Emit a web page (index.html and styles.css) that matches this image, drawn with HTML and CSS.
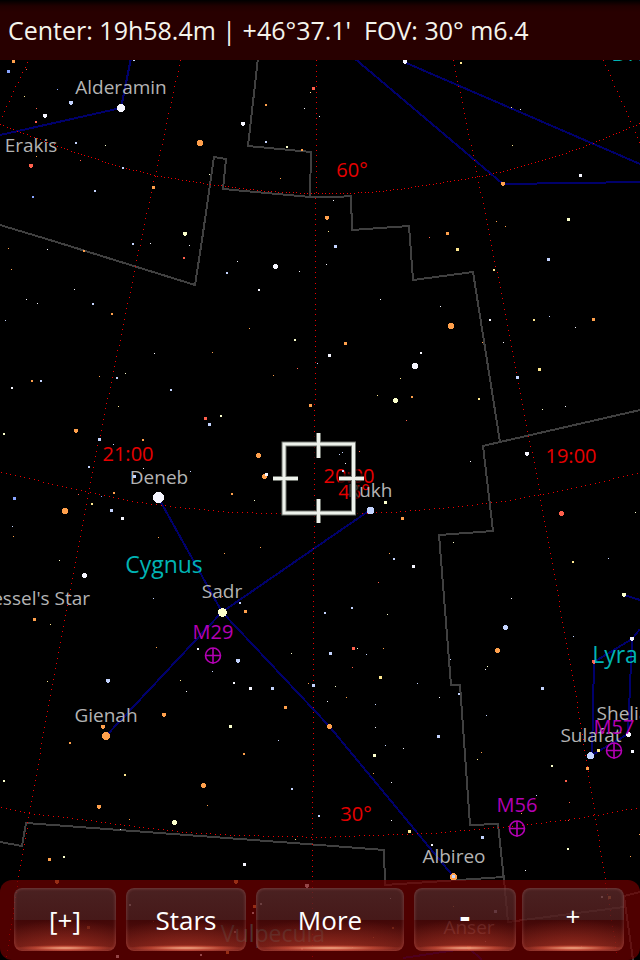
FILE: index.html
```
<!DOCTYPE html>
<html lang="en">
<head>
    <meta charset="UTF-8">
    <meta name="viewport" content="width=device-width, initial-scale=1.0">
    <title>Star Chart</title>
    <link rel="stylesheet" href="styles.css">
</head>
<body>

<svg class="sky" viewBox="0 0 640 960" preserveAspectRatio="xMidYMid slice" role="img" aria-label="Sky chart around Cygnus">
    <!-- Constellation boundaries -->
    <g class="boundaries">
        <polyline points="258,58 248,146 311,152 310,196"/>
        <polyline points="0,225 50,240 195,285 202,240 214,157 226,159 223,189 310,197 337,197 351,196 352,230 409,226 413,280 473,272 500,442"/>
        <polyline points="640,410 500,442 483,446 493,531 439,535 451,685 460,685 470,825 498,824 504,880 508,922 624,907 624,896 640,892"/>
        <polyline points="624,896 633,960"/>
        <polyline points="0,842 22,846 26,823 320,845 384,850 385,885 503,877"/>
    </g>

    <!-- Constellation figures -->
    <g class="figures">
        <polyline points="131,58 121,108 0,135"/>
        <polyline points="354,58 503,184 640,182"/>
        <polyline points="404,62 640,164"/>
        <polyline points="158,497 222,612 106,736"/>
        <polyline points="370,510 222,612 329,726 453,876"/>
        <polyline points="624,595 640,600"/>
        <polyline points="640,629 632,639 594,662 592,755 628,734 632,639"/>
        <polyline points="403,958 469,948 482,960"/>
    </g>

    <g id="grid" class="grid"></g>

    <g class="label grid-label">
        <text x="128" y="461">21:00</text>
        <text x="349" y="483">20:00</text>
        <text x="571" y="463">19:00</text>
        <text x="352" y="177">60°</text>
        <text x="354" y="499">45°</text>
        <text x="356" y="821">30°</text>
    </g>

    <g class="label star-label">
        <text x="121" y="94">Alderamin</text>
        <text x="31" y="152">Erakis</text>
        <text x="159" y="484">Deneb</text>
        <text x="370" y="497">Rukh</text>
        <text x="35" y="605">Bessel's Star</text>
        <text x="222" y="598">Sadr</text>
        <text x="106" y="722">Gienah</text>
        <text x="454" y="863">Albireo</text>
        <text x="591" y="742">Sulafat</text>
        <text x="628" y="720">Sheliak</text>
        <text x="469" y="934">Anser</text>
    </g>

    <g id="stars" class="stars"></g>

    <g class="label constellation-label">
        <text x="164" y="573">Cygnus</text>
        <text x="615" y="663">Lyra</text>
        <text x="643" y="61">Draco</text>
        <text x="273" y="942">Vulpecula</text>
    </g>

    <g class="label messier-label">
        <text x="213" y="639">M29</text>
        <text x="517" y="812">M56</text>
        <text x="614" y="734">M57</text>
    </g>
    <g class="messier">
        <path d="M205.5 655.5a7.5 7.5 0 1 0 15 0a7.5 7.5 0 1 0 -15 0M205 655.5h16M213 648v16"/>
        <path d="M509.5 828.5a7.5 7.5 0 1 0 15 0a7.5 7.5 0 1 0 -15 0M509 828.5h16M517 821v16"/>
        <path d="M606.5 750.5a7.5 7.5 0 1 0 15 0a7.5 7.5 0 1 0 -15 0M606 750.5h16M614 743v16"/>
    </g>

    <!-- Reticle -->
    <g class="reticle">
        <path class="reticle-shadow" d="M284 444H353.5V513H284ZM318.5 433V458M318.5 499V523M273 478.5H298M339 478.5H364"/>
        <path class="reticle-edge" d="M284 444H353.5V513H284ZM318.5 433V458M318.5 499V523M273 478.5H298M339 478.5H364"/>
        <path class="reticle-line" d="M284 444H353.5V513H284ZM318.5 433V458M318.5 499V523M273 478.5H298M339 478.5H364"/>
    </g>
</svg>

<div class="screen">
    <header class="status">Center: 19h58.4m | +46°37.1'&nbsp; FOV: 30° m6.4</header>

    <nav class="toolbar">
        <button class="key key-small" type="button">[+]</button>
        <button class="key key-stars" type="button">Stars</button>
        <button class="key key-more" type="button">More</button>
        <div class="zoom">
            <button class="key key-sign key-minus" type="button">-</button>
            <button class="key key-sign" type="button">+</button>
        </div>
    </nav>
</div>

<script src="script.js"></script>
</body>
</html>
```
FILE: styles.css
```
* {
    box-sizing: border-box;
}
body {
    margin: 0;
    background-color: #000;
    font-family: "Open Sans", "Noto Sans", sans-serif;
    overflow: hidden;
}
.sky {
    position: absolute;
    top: 0;
    left: 0;
    width: 100%;
    height: 100%;
}
.screen {
    position: relative;
    min-height: 100vh;
    display: flex;
    flex-direction: column;
    justify-content: space-between;
}

/* chart */
.boundaries {
    fill: none;
    stroke: #404040;
    stroke-width: 2;
}
.figures {
    fill: none;
    stroke: #00006c;
    stroke-width: 2;
}
.grid {
    fill: #f00000;
}
.boundaries, .figures, .grid, .stars {
    shape-rendering: crispEdges;
}
.label {
    font-size: 19px;
    text-anchor: middle;
}
.grid-label {
    fill: #e60000;
    font-size: 20px;
}
.star-label {
    fill: #b4b4b4;
}
.constellation-label {
    fill: #00b4b4;
    font-size: 23px;
}
.messier-label {
    fill: #b400b4;
    font-size: 20px;
}
.messier {
    fill: none;
    stroke: #b400b4;
    stroke-width: 1.6;
}
.reticle {
    fill: none;
}
.reticle-shadow {
    stroke: #000;
    stroke-width: 10;
    stroke-opacity: 0.7;
}
.reticle-edge {
    stroke: #70746e;
    stroke-width: 5;
}
.reticle-line {
    stroke: #eef2ec;
    stroke-width: 3;
}
.o { fill: #ffa04c; }
.r { fill: #ff604c; }
.Y { fill: #ffe890; }
.y { fill: #fbffcc; }
.w { fill: #f6f6ff; }
.b { fill: #c4d4ff; }
.B { fill: #88a4ff; }

/* top line */
.status {
    height: 60px;
    padding: 0 8px;
    line-height: 60px;
    font-size: 25px;
    white-space: pre;
    color: #f4f4ec;
    background: linear-gradient(#000, #200000 6px, #280000 12px);
}

/* bottom buttons */
.toolbar {
    display: flex;
    gap: 10px;
    height: 80px;
    padding: 8px 16px 9px 14px;
    border-radius: 12px;
    background-color: rgba(109, 0, 0, 0.72);
}
.key {
    flex: 102 1 0;
    min-width: 0;
    padding: 0;
    border: none;
    border-radius: 8px;
    font-family: inherit;
    font-size: 26px;
    color: #fff;
    background:
        radial-gradient(ellipse 50% 3px at 50% 60px, rgba(255, 190, 150, 0.9), rgba(255, 110, 80, 0.4) 60%, transparent),
        radial-gradient(ellipse 75% 32px at 50% 100%, rgba(190, 60, 40, 0.55), transparent),
        linear-gradient(rgba(70, 66, 66, 0.5), rgba(62, 50, 50, 0.5) 50%, rgba(52, 14, 14, 0.5) 51%, rgba(130, 50, 40, 0.5));
    box-shadow: inset 0 0 3px 1px rgba(255, 150, 150, 0.22);
    cursor: pointer;
}
.key-stars {
    flex-grow: 120;
}
.key-more {
    flex-grow: 148;
}
.zoom {
    flex: 210 1 0;
    display: flex;
    gap: 6px;
}
.key-sign {
    padding-bottom: 8px;
}
.key-minus {
    font-size: 32px;
    font-weight: bold;
}
```
FILE: script.js
```
const svgNS = "http://www.w3.org/2000/svg";
const starLayer = document.getElementById("stars");
const gridLayer = document.getElementById("grid");

// x y size colour
const stars = `
13 61 3 o|8 71 3 B|26 69 1 r|24 96 1 Y|57 89 1 B|71 103 4 b|36 108 1 r|45 116 4 w|36 122 2 r|76 143 2 b
105 145 1 y|36 156 1 o|31 166 4 r|80 160 1 r|123 168 2 b|95 191 2 b|33 197 2 B|153 187 3 o|121 108 8 w|200 143 6 o
134 60 2 b|209 174 1 y|185 234 4 y|243 124 4 w|266 105 2 o|304 108 1 w|313 88 3 r|310 92 1 Y|319 116 1 w|266 142 2 b
287 147 2 y|302 150 2 o|280 178 1 o|405 62 4 w|461 63 2 Y|511 107 1 Y|520 109 1 w|512 145 1 Y|503 184 4 o|580 175 3 w
568 219 3 y|496 221 1 o|505 226 1 o|447 233 3 o|429 237 1 r|327 218 4 o|328 231 1 Y|333 200 1 w|8 248 1 o|11 269 1 o
47 249 1 w|74 289 1 w|84 251 2 o|133 244 2 b|150 243 1 w|189 245 1 w|184 258 2 r|237 261 1 w|275 266 5 w|299 271 1 w
227 273 2 b|259 290 2 w|26 299 1 w|37 303 1 w|93 304 2 b|112 314 2 o|5 320 1 b|249 328 1 o|295 340 2 y|154 353 1 w
212 352 1 o|317 363 1 b|297 368 1 r|99 376 1 o|117 378 2 b|125 373 1 y|273 375 1 o|32 381 2 o|41 381 2 b|12 388 2 w
171 390 2 b|118 406 1 Y|310 405 3 o|205 418 3 r|221 416 2 y|209 424 3 b|76 431 4 o|99 439 3 b|4 434 2 y|113 444 1 b
143 440 2 o|258 455 5 o|264 476 5 o|266 474 3 w|89 467 2 b|143 468 1 w|190 471 1 b|134 476 3 b|335 246 3 b|326 264 1 w
457 249 3 Y|548 259 3 b|494 270 2 Y|380 299 1 w|440 306 1 w|490 320 2 w|534 320 2 Y|549 316 1 b|593 319 3 o|575 327 1 w
451 326 6 o|345 343 3 o|329 355 3 w|482 342 1 o|503 342 1 w|421 353 2 w|415 366 6 w|400 378 1 Y|539 369 3 Y|517 377 3 b
377 395 1 Y|395 400 5 y|412 397 2 o|479 399 2 Y|542 409 1 y|565 406 1 w|406 420 1 r|527 454 4 w|470 461 1 w|342 452 1 b
339 454 1 b|345 463 1 w|359 451 1 r|343 471 2 b|14 498 3 B|65 511 6 o|78 494 1 r|92 504 2 Y|101 496 1 B|114 493 2 o
111 510 3 b|122 518 3 w|158 497 11 w|12 526 1 b|13 536 1 o|59 560 1 y|158 537 1 o|84 575 5 w|153 598 1 b|34 619 3 o
50 624 1 Y|224 553 1 o|260 547 1 o|254 500 1 y|232 494 2 o|222 612 9 y|240 603 2 b|245 611 3 o|156 647 1 o|198 649 2 w
238 661 4 b|291 653 1 y|212 671 1 b|180 680 1 Y|234 683 2 w|250 688 3 w|272 688 3 b|313 685 3 b|308 683 1 o|108 681 4 b
47 681 1 Y|186 691 1 w|285 707 3 o|164 715 4 o|222 596 1 r|370 510 7 b|385 502 3 y|402 518 3 o|561 513 5 r|635 512 1 y
453 542 1 y|389 553 1 o|394 559 2 b|413 566 3 w|573 562 2 Y|608 558 1 b|378 582 1 r|511 598 1 w|624 595 4 y|325 613 2 b
352 608 2 b|387 614 1 y|505 627 5 b|573 636 1 b|632 639 4 w|594 662 4 r|497 650 5 o|353 648 3 r|357 648 1 y|383 648 1 o
330 653 3 b|366 654 1 b|450 659 1 b|487 666 1 y|485 669 1 w|352 667 1 r|380 677 3 Y|417 683 1 b|335 686 1 y|459 694 2 b
542 688 3 b|327 701 1 w|346 697 1 o|439 697 1 w|375 704 1 b|486 715 1 b|103 727 4 o|106 736 8 o|70 743 2 o|230 726 3 y
278 740 1 b|244 754 2 o|125 775 2 Y|4 781 2 y|203 785 5 o|292 789 2 b|99 807 4 o|207 805 1 o|129 819 1 o|174 822 5 y
319 816 2 b|120 829 1 w|295 839 1 Y|49 859 3 o|64 857 2 y|244 864 3 w|329 726 5 o|375 727 1 w|438 736 3 b|385 745 1 b
403 748 1 w|374 755 3 y|481 752 1 o|477 759 1 Y|552 766 2 y|373 773 1 o|391 782 1 w|566 781 2 r|536 795 1 b|569 802 1 r
391 820 1 w|521 813 1 o|568 820 1 r|590 755 7 b|598 750 3 Y|628 734 5 w|632 751 3 w|587 768 3 o|409 831 3 Y|432 845 2 w
482 837 3 b|568 849 2 y|630 856 1 o|639 834 1 o|525 870 1 w|453 876 7 o|453 876 3 b|57 882 4 o|236 882 4 o|307 886 4 w
254 906 3 o|261 904 2 w|253 913 2 w|88 927 3 o|130 905 2 w|153 921 1 r|117 956 3 w|201 955 2 w|227 952 3 o|235 932 2 w
302 949 2 w|390 898 1 w|453 906 1 o|495 911 3 b|393 928 2 o|602 897 2 w|609 897 3 o|373 937 1 o|352 947 1 w|469 948 4 o
485 941 1 w|581 946 1 w`;

// Coordinate grid: distance between dots, then the points of the line
const gridLines = [
    [5.4, [27, 62, 1, 117]],
    [5.4, [180, 60, 141, 238, 91, 476, 46, 716, 18, 877, 6, 957]],
    [5.3, [316, 60, 315, 330, 313, 620, 312, 960]],
    [5.4, [453, 60, 490, 238, 537, 480, 577, 704, 604, 874, 617, 957]],
    [5.6, [603, 60, 640, 143]],
    [3.6, [0, 124, 12, 129, 50, 143, 80, 154, 123, 167, 154, 175, 210, 184, 266, 191, 309, 193, 345, 193, 370, 192, 405, 188, 450, 181, 487, 175, 550, 158, 587, 145, 640, 123]],
    [4.8, [1, 472, 33, 479, 53, 484, 88, 492, 130, 501, 178, 507, 233, 512, 277, 513, 359, 513, 392, 512, 450, 507, 503, 501, 553, 492, 603, 481, 640, 472]],
    [4.8, [1, 807, 29, 813, 72, 818, 142, 827, 185, 832, 237, 835, 283, 836, 321, 837, 370, 835, 430, 833, 477, 829, 530, 824, 577, 818, 607, 813, 640, 807]]
];

function addRect(layer, x, y, w, h, name) {
    const rect = document.createElementNS(svgNS, "rect");
    rect.setAttribute("x", x);
    rect.setAttribute("y", y);
    rect.setAttribute("width", w);
    rect.setAttribute("height", h);
    if (name) rect.setAttribute("class", name);
    layer.appendChild(rect);
    return rect;
}

// Small stars are square dots, bright ones are discs
stars.trim().split(/[|\n]/).forEach(row => {
    const [x, y, size, colour] = row.split(" ");
    const s = Number(size);
    const offset = Math.floor(s / 2);
    if (s < 5) {
        addRect(starLayer, x - offset, y - offset, s, s === 4 ? 3 : s, colour);
        if (s === 4) addRect(starLayer, x - 1, y - offset, 2, 4, colour);
    } else {
        addRect(starLayer, x - offset, y - offset, s, s, colour).setAttribute("rx", s / 2);
    }
});

gridLines.forEach(([gap, p]) => {
    let left = 0;
    for (let i = 0; i < p.length - 2; i += 2) {
        const dx = p[i + 2] - p[i];
        const dy = p[i + 3] - p[i + 1];
        const length = Math.hypot(dx, dy);
        let d = left;
        for (; d < length; d += gap) {
            addRect(gridLayer, Math.round(p[i] + dx * d / length), Math.round(p[i + 1] + dy * d / length), 1, 1);
        }
        left = d - length;
    }
});
```
